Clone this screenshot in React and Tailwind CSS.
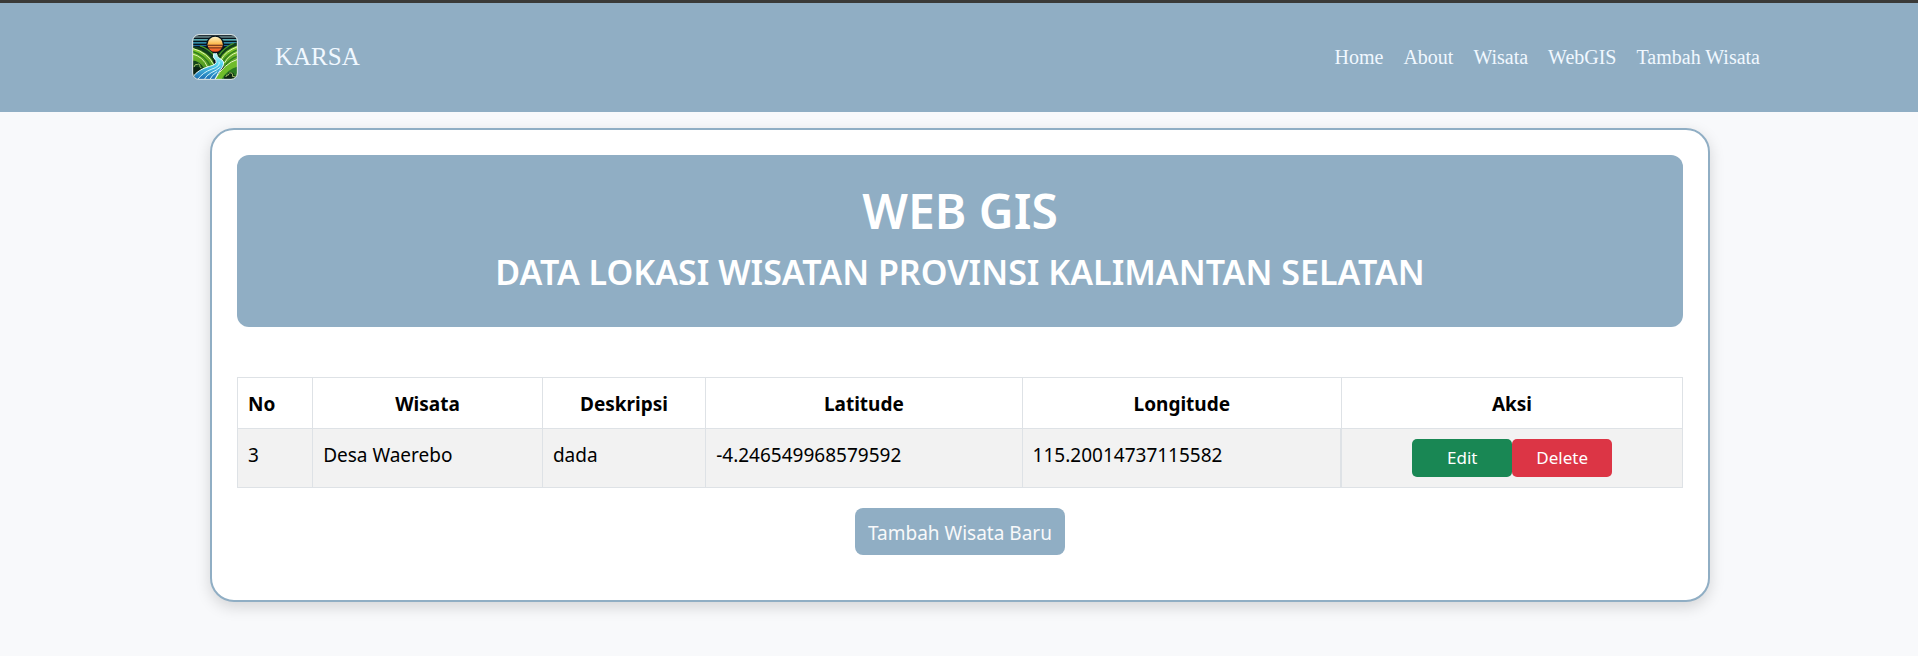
const navLinks = ["Home", "About", "Wisata", "WebGIS", "Tambah Wisata"];
const rows = [
  { no: 3, wisata: "Desa Waerebo", deskripsi: "dada", lat: "-4.246549968579592", lng: "115.20014737115582" },
];

function Logo() {
  return (
    <svg viewBox="0 0 139 139" className="size-[46px] shrink-0" role="img" aria-label="KARSA">
      <defs>
        <linearGradient id="sun" x1="0" y1="0" x2="0" y2="1">
          <stop offset="0" stopColor="#fff3c4" />
          <stop offset="0.45" stopColor="#fbbd55" />
          <stop offset="1" stopColor="#f2481c" />
        </linearGradient>
        <linearGradient id="river" x1="0" y1="0" x2="0" y2="1">
          <stop offset="0" stopColor="#c4faff" />
          <stop offset="0.4" stopColor="#55d6f0" />
          <stop offset="1" stopColor="#1767b0" />
        </linearGradient>
        <linearGradient id="hill" x1="0" y1="0" x2="0" y2="1">
          <stop offset="0" stopColor="#86cc28" />
          <stop offset="1" stopColor="#2a7420" />
        </linearGradient>
        <clipPath id="frame"><rect x="3" y="3" width="133" height="133" rx="18" /></clipPath>
      </defs>
      <g clipPath="url(#frame)">
        <rect width="139" height="139" fill="#07141c" />
        <path d="M0 9H139" stroke="#a8cccb" strokeWidth="3" />
        <path d="M0 18H139" stroke="#74dbe0" strokeWidth="4" />
        <path d="M0 27H139" stroke="#3fb0d4" strokeWidth="4" />
        <path d="M0 35H139" stroke="#1f6ea8" strokeWidth="3" />
        <circle cx="70" cy="31" r="27" fill="#07141c" />
        <circle cx="70" cy="31" r="23" fill="url(#sun)" />
        <path d="M47 34H93M48 42H92" stroke="#5a2412" strokeWidth="3" />
        <path d="M0 36Q48 42 70 68L60 96 0 80Z" fill="#12401c" />
        <path d="M139 24Q92 38 74 66L90 90 139 70Z" fill="#12401c" />
        <path d="M24 36Q52 46 66 64M126 28Q98 40 82 64" stroke="#4a9a2a" strokeWidth="4" fill="none" />
        <path d="M0 42Q52 52 68 92L28 122 0 136Z" fill="url(#hill)" />
        <path d="M0 43Q48 56 66 94M0 60Q34 68 48 102" stroke="#dff5b4" strokeWidth="3" fill="none" />
        <path d="M0 52Q40 64 56 98" stroke="#2c7a1e" strokeWidth="4" fill="none" />
        <path d="M139 34Q94 50 84 76L98 104 70 139H139Z" fill="url(#hill)" />
        <path d="M139 38Q100 52 88 78M139 55Q112 62 98 88" stroke="#dff5b4" strokeWidth="3" fill="none" />
        <path d="M139 47Q106 60 93 84M139 67Q114 74 98 100" stroke="#2c7a1e" strokeWidth="4" fill="none" />
        <path d="M139 76Q98 88 68 139H139Z" fill="#6fbc2b" />
        <path d="M139 76Q98 88 68 139" stroke="#e6f6c4" strokeWidth="3" fill="none" />
        <path d="M139 98Q106 106 88 139H139Z" fill="#2b7a22" />
        <path d="M0 80Q24 80 38 106L20 122 0 136Z" fill="#14451a" />
        <path d="M0 100Q20 96 30 108L16 122 0 130Z" fill="#0b2414" />
        <path d="M6 100Q8 90 16 92Q24 88 24 98L28 103" stroke="#a9c96a" strokeWidth="3" fill="none" />
        <path d="M98 139Q94 124 106 124Q110 112 120 116Q128 116 126 124L139 130V139Z" fill="#0b2414" />
        <path d="M102 130Q104 122 110 124Q112 114 121 119Q125 124 122 128L132 130" stroke="#a9c96a" strokeWidth="3" fill="none" />
        <path d="M66 58Q60 70 72 80Q78 92 52 98Q18 108 4 128V139H68Q78 118 92 100Q102 82 84 74Q74 68 74 58Z" fill="url(#river)" />
        <path d="M66 58Q60 70 72 80Q78 92 52 98Q18 108 4 128M74 58Q74 68 84 74Q102 82 92 100Q78 118 68 139" stroke="#effcff" strokeWidth="3" fill="none" />
        <path d="M82 84Q86 98 60 106Q32 116 16 139M86 100Q74 110 58 117Q44 124 36 139M76 114Q60 124 53 139" stroke="#d4f5fb" strokeWidth="3" fill="none" />
      </g>
      <rect x="2" y="2" width="135" height="135" rx="19" fill="none" stroke="#dfe6e4" strokeWidth="3" />
    </svg>
  );
}

export default function App() {
  const cell = "border border-[#dee2e6] px-[10px] pt-[11px] pb-[9px]";
  return (
    <div className="min-h-screen bg-[#f8f9fb] font-['Noto_Sans',sans-serif] text-[19px] leading-[30px] text-black">
      <header className="border-t-3 border-[#3a3a38] bg-[#90aec4] font-['Liberation_Serif',serif] text-[#f0f8ff]">
        <div className="mx-auto flex h-[109px] max-w-[1650px] items-center justify-between pr-6 pb-px pl-[58px]">
          <a href="#" className="flex items-center gap-[37px] text-[25px]">
            <Logo />
            <span>KARSA</span>
          </a>
          <nav className="flex gap-5 text-[20px]">
            {navLinks.map((label) => (
              <a key={label} href="#">{label}</a>
            ))}
          </nav>
        </div>
      </header>

      <div className="pt-4 pl-0.5">
        <main className="mx-auto max-w-[1500px] rounded-3xl border-2 border-[#90aec4] bg-white px-[25px] pt-[25px] pb-[45px] shadow-[0_5px_15px_rgba(0,0,0,0.15)]">
          <div className="rounded-xl bg-[#90aec4] px-6 pt-[26px] pb-[34px] text-center font-semibold text-white">
            <h1 className="text-[48px] leading-[60px]">WEB GIS</h1>
            <h2 className="mt-[10px] text-[34px] leading-[42px]">DATA LOKASI WISATAN PROVINSI KALIMANTAN SELATAN</h2>
          </div>

          <table className="mt-[50px] w-full table-fixed border-collapse">
            <colgroup>
              <col className="w-[5.2%]" />
              <col className="w-[15.9%]" />
              <col className="w-[11.3%]" />
              <col className="w-[21.9%]" />
              <col className="w-[22.1%]" />
              <col className="w-[23.6%]" />
            </colgroup>
            <thead>
              <tr>
                <th className={`${cell} text-left`}>No</th>
                <th className={cell}>Wisata</th>
                <th className={cell}>Deskripsi</th>
                <th className={cell}>Latitude</th>
                <th className={cell}>Longitude</th>
                <th className={cell}>Aksi</th>
              </tr>
            </thead>
            <tbody>
              {rows.map((row) => (
                <tr key={row.no} className="bg-[#f2f2f2] align-top">
                  <td className={cell}>{row.no}</td>
                  <td className={cell}>{row.wisata}</td>
                  <td className={cell}>{row.deskripsi}</td>
                  <td className={cell}>{row.lat}</td>
                  <td className={cell}>{row.lng}</td>
                  <td className="border border-l-2 border-[#dee2e6] p-[10px]">
                    <div className="flex justify-center text-[17px] text-white">
                      <button type="button" className="h-[38px] w-[100px] rounded-[5px] bg-[#198754]">Edit</button>
                      <button type="button" className="h-[38px] w-[100px] rounded-[5px] bg-[#dc3545]">Delete</button>
                    </div>
                  </td>
                </tr>
              ))}
            </tbody>
          </table>

          <div className="mt-5 flex justify-center">
            <a href="#" className="rounded-lg bg-[#90aec4] px-[13px] pt-[10px] pb-[7px] text-[#f8f9fa]">Tambah Wisata Baru</a>
          </div>
        </main>
      </div>
    </div>
  );
}
